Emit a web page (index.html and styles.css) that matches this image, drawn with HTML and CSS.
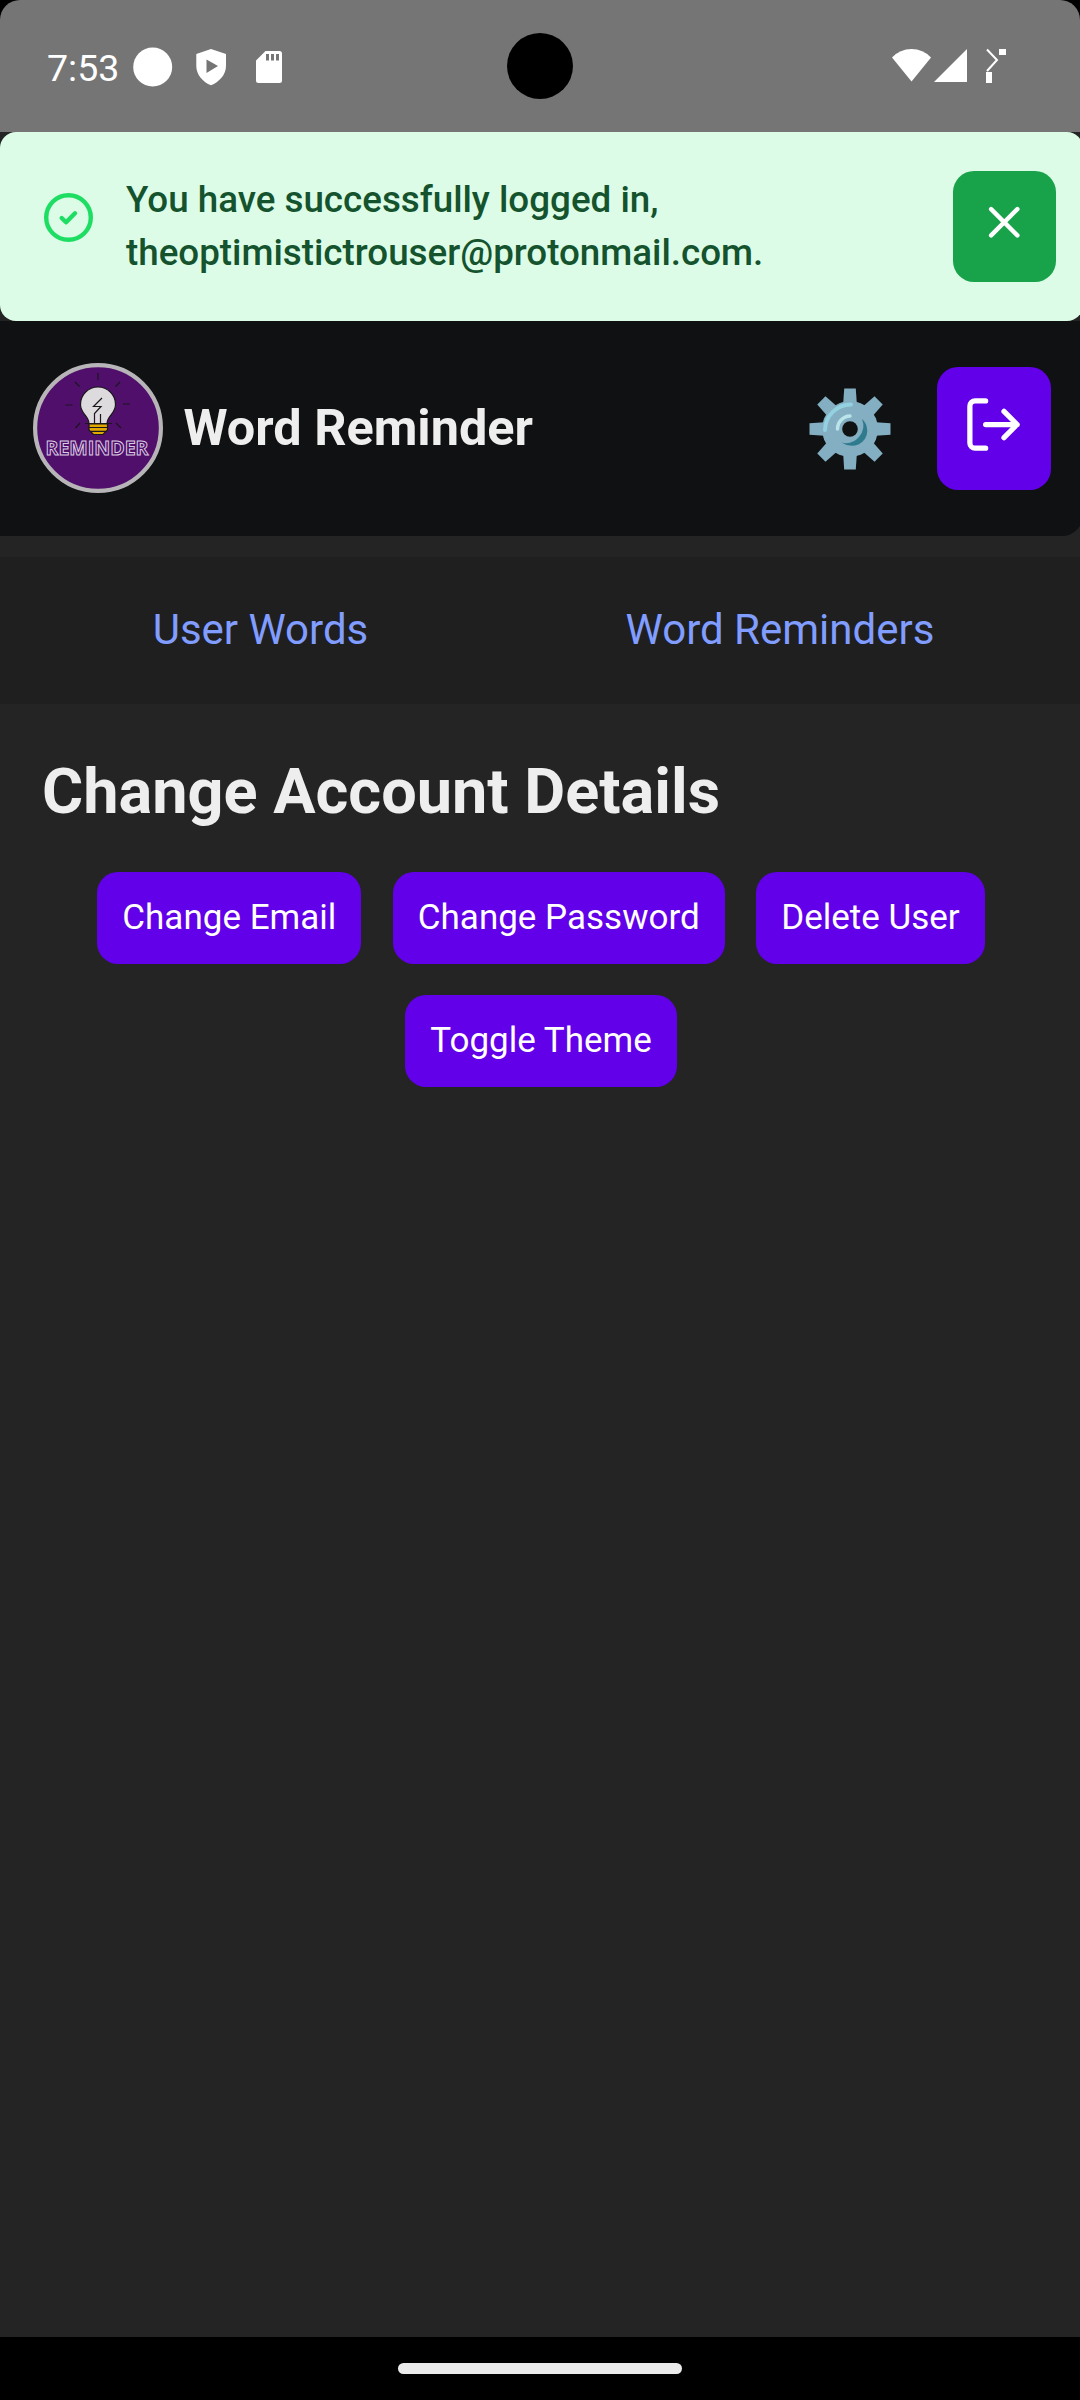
FILE: index.html
```html
<!DOCTYPE html>
<html lang="en">
<head>
<meta charset="utf-8">
<title>Word Reminder</title>
<link rel="stylesheet" href="styles.css">
</head>
<body>
<div class="screen">
  <div class="status-bar">
    <span class="clock">7:53</span>
    <svg class="status-left" width="170" height="132" viewBox="120 0 170 132" fill="#fff">
      <circle cx="152.700" cy="67" r="19.500"/>
      <path fill-rule="evenodd" d="M211 49 226 54V66C226 75 219 82 211 85.300C203 82 196.300 75 196.300 66V54ZM206.500 59.500V73L218 66Z"/>
      <path fill-rule="evenodd" d="M265.500 51H279.500Q282 51 282 53.500V80.500Q282 83 279.500 83H258.500Q256 83 256 80.500V60.500ZM266 54V60.500H269V54ZM271 54V60.500H274V54ZM276 54V60.500H279V54Z"/>
    </svg>
    <span class="camera"></span>
    <svg class="status-right" width="130" height="132" viewBox="885 0 130 132" fill="#fff">
      <path d="M892 57.500Q900 49 911.500 49T931 57.500L911.500 81.500Z"/>
      <path d="M967 49V82H934Z"/>
      <path d="M987 49.500 997 60 987 71" fill="none" stroke="#fff" stroke-width="2"/>
      <path d="M999 49h7v6h-7zM986 72h6v11h-6z"/>
    </svg>
  </div>

  <div class="toast">
    <svg class="toast-icon" width="50" height="50" viewBox="0 0 50 50" fill="none" stroke="#1edd63" stroke-linecap="round" stroke-linejoin="round">
      <circle cx="25.500" cy="24.500" r="22.300" stroke-width="4.400"/>
      <path d="M18.700 25 23.100 29.300 32 20.300" stroke-width="4.400"/>
    </svg>
    <p class="toast-text">You have successfully logged in,<br>theoptimistictrouser@protonmail.com.</p>
    <button class="button button-close" aria-label="Close">
      <svg width="52.500" height="52.500" viewBox="0 0 24 24" fill="none" stroke="#fff" stroke-width="2" stroke-linecap="round"><path d="M6 6 18 18M18 6 6 18"/></svg>
    </button>
  </div>

  <header class="header">
    <svg class="logo" width="130" height="130" viewBox="0 0 130 130">
      <circle cx="65" cy="65" r="62.900" fill="#4f0f6b" stroke="#b7b5b7" stroke-width="4.200"/>
      <g stroke="#1a161c" stroke-width="1.200" fill="none">
        <path d="M65 10v7M42 19l4.500 4.500M87 19l-4.500 4.500M32.500 42h7M90 41h7M47 60l-4.500 5M83 60l5 5"/>
        <path d="M56 60.500C56 53 47.500 51 47.500 41.500A17.500 17.500 0 0 1 82.500 41.500C82.500 51 74 53 74 60.500Z" fill="#dddbdd"/>
        <path d="M56 61H74.500V67L70 71.500H60.500L56 67Z" fill="#e0a800"/>
        <path d="M56 64.500H74.500M58 68.300H73M52 60.500H79M69 35 60.500 43.500H68L61.500 50.500V60M67.500 60V51"/>
      </g>
      <text class="logo-text" x="12.500" y="92.300" textLength="103" lengthAdjust="spacingAndGlyphs">REMINDER</text>
    </svg>
    <h1 class="brand">Word Reminder</h1>
    <svg class="gear" width="82" height="82" viewBox="-41 -41 82 82">
      <g fill="#84aec1">
        <path id="tooth" d="M-7 -22 -5.800 -40.500H5.800L7 -22Z"/>
        <use href="#tooth" transform="rotate(45)"/><use href="#tooth" transform="rotate(90)"/>
        <use href="#tooth" transform="rotate(135)"/><use href="#tooth" transform="rotate(180)"/>
        <use href="#tooth" transform="rotate(225)"/><use href="#tooth" transform="rotate(270)"/>
        <use href="#tooth" transform="rotate(315)"/>
        <circle r="28"/>
      </g>
      <path d="M12 -10A17.500 17.500 0 0 1 -8.500 13.500Q0 19 8.500 15.500Q17 11 17.300 2Q17 -6 12 -10Z" fill="#2f7b8e"/>
      <path d="M-25 1A26 26 0 0 1 1 -24.500" fill="none" stroke="#94d1e0" stroke-width="4" stroke-linecap="round"/>
      <path d="M-12.500 0A13 13 0 0 1 0 -13" fill="none" stroke="#b9e4ea" stroke-width="3.500" stroke-linecap="round"/>
      <circle r="7.800" fill="#101113"/>
    </svg>
    <button class="button button-logout" aria-label="Log out">
      <svg width="63" height="63" viewBox="0 0 24 24" fill="none" stroke="#fff" stroke-width="2" stroke-linecap="round" stroke-linejoin="round"><path d="M9 21H5a2 2 0 0 1-2-2V5a2 2 0 0 1 2-2h4M16 17l5-5-5-5M21 12H9"/></svg>
    </button>
  </header>

  <nav class="nav">
    <a class="nav-link">User Words</a>
    <a class="nav-link">Word Reminders</a>
  </nav>

  <main class="content">
    <h2 class="heading">Change Account Details</h2>
    <div class="actions">
      <button class="button button-text">Change Email</button>
      <button class="button button-text">Change Password</button>
      <button class="button button-text">Delete User</button>
      <button class="button button-text">Toggle Theme</button>
    </div>
  </main>

  <div class="system-nav"><span class="pill"></span></div>
</div>
</body>
</html>
```
FILE: styles.css
```css
* { box-sizing: border-box; }
body { margin: 0; background: #000; font-family: Roboto, sans-serif; }
svg { display: block; flex: none; }
h1, h2, p { margin: 0; }

.screen {
  display: flex;
  flex-direction: column;
  width: 1080px;
  height: 2400px;
  overflow: hidden;
  background: linear-gradient(#000 66px, #242424 66px);
}

.status-bar {
  display: flex;
  align-items: center;
  flex: none;
  height: 132px;
  background: #757575;
  border-radius: 20px 20px 0 0;
}
.clock { width: 120px; padding-left: 47px; padding-top: 3px; font-size: 37.5px; color: #fff; }
.camera { width: 66px; height: 66px; margin-left: 217px; border-radius: 50%; background: #000; }
.status-right { margin-left: auto; margin-right: 65px; }

.toast {
  display: flex;
  flex: none;
  width: 1083px;
  height: 189px;
  padding: 39px 27px 39px 43px;
  background: #dcfce7;
  border-radius: 16px;
}
.toast-icon { margin-top: 21.500px; }
.toast-text { margin-left: 33px; margin-top: 2px; font-size: 36.75px; font-weight: 500; line-height: 53px; color: #14532d; white-space: nowrap; }

.button {
  display: flex;
  align-items: center;
  justify-content: center;
  flex: none;
  padding: 0;
  border: 0;
  border-radius: 21px;
  background: #6200ea;
  color: #fff;
  font: 35px Roboto, sans-serif;
}
.button-close { width: 103px; height: 111px; margin-left: auto; padding-bottom: 9px; background: #18a34a; }

.header {
  display: flex;
  align-items: center;
  flex: none;
  width: 1083px;
  height: 215px;
  padding: 0 32px 0 32.500px;
  background: #101113;
  border-radius: 0 0 21px 0;
}
.logo { margin-top: -1px; }
.logo-text { font: 700 20px "Open Sans", sans-serif; fill: #4f0f6b; stroke: #d9cbe0; stroke-width: 1; }
.brand { margin-left: 21px; margin-top: -2px; font-size: 50.4px; font-weight: 700; color: #eee; white-space: nowrap; }
.gear { margin-left: auto; margin-right: 46.200px; }
.button-logout { width: 114px; height: 123px; padding: 0 2px 8px 0; }

.nav {
  display: flex;
  align-items: center;
  justify-content: space-around;
  flex: none;
  height: 147px;
  margin-top: 21px;
  padding: 0 17px 2px 24px;
  background: #1f1f1f;
}
.nav-link { font-size: 42px; color: #809dff; white-space: nowrap; }

.content { flex: 1; padding: 51px 40px 0 42px; }
.heading { height: 117px; font-size: 63px; font-weight: 700; line-height: 74px; color: #eee; white-space: nowrap; }
.actions { display: flex; flex-wrap: wrap; justify-content: center; gap: 31px 31.500px; }
.button-text { height: 92px; padding: 0 25px 2px; white-space: nowrap; }

.system-nav { display: flex; align-items: center; justify-content: center; flex: none; height: 63px; background: #000; }
.pill { width: 284px; height: 11px; border-radius: 6px; background: #ebebeb; }
```
